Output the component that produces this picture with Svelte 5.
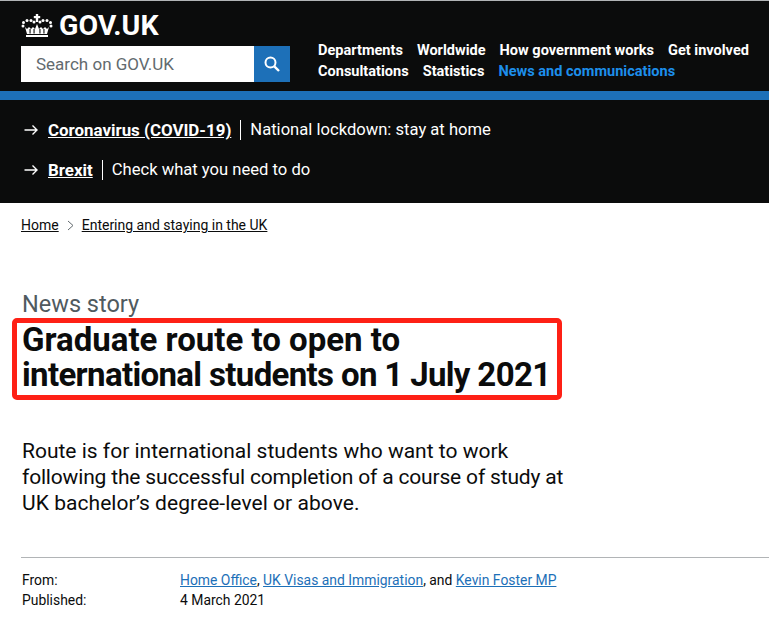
<script>
  const navRows = [
    [{ t: 'Departments' }, { t: 'Worldwide' }, { t: 'How government works' }, { t: 'Get involved' }],
    [{ t: 'Consultations' }, { t: 'Statistics' }, { t: 'News and communications', active: true }]
  ];
  const notices = [
    { link: 'Coronavirus (COVID-19)', text: 'National lockdown: stay at home' },
    { link: 'Brexit', text: 'Check what you need to do' }
  ];
  const beads = [
    [2, 12], [2.5, 8.5], [6, 6.5], [10, 6.5], [13, 8], [19, 8], [22, 6.5], [26, 6.5], [29.5, 8.5], [30, 12]
  ];
</script>

<div class="page">
  <header class="top">
    <div class="left">
      <div class="logo">
        <svg class="crown" width="32" height="23" viewBox="0 0 32 23" aria-hidden="true">
          <g fill="#fff">
            <rect x="14.8" y="0" width="2.4" height="8" />
            <rect x="12.8" y="2" width="6.4" height="2.2" />
            {#each beads as b}
              <circle cx={b[0]} cy={b[1]} r="1.5" />
            {/each}
            <path d="M4 13l2 2 2-2 2 2 2-2 2 2 2-5 2 5 2-2 2 2 2-2 2 2 2-2-2 7H6z" />
            <rect x="5" y="21" width="22" height="2" />
          </g>
          <g fill="#0b0c0c">
            <rect x="8.5" y="15" width="1.1" height="4.5" />
            <rect x="12.5" y="15" width="1.1" height="4.5" />
            <rect x="18.4" y="15" width="1.1" height="4.5" />
            <rect x="22.4" y="15" width="1.1" height="4.5" />
          </g>
        </svg>
        <span class="wordmark">GOV.UK</span>
      </div>
      <div class="search">
        <span class="placeholder">Search on GOV.UK</span>
        <span class="btn">
          <svg width="18" height="18" viewBox="0 0 18 18" aria-hidden="true">
            <circle cx="7.5" cy="7.5" r="5" fill="none" stroke="#fff" stroke-width="2" />
            <path d="M11.3 11.3L16 16" stroke="#fff" stroke-width="2.4" />
          </svg>
        </span>
      </div>
    </div>
    <nav class="nav">
      {#each navRows as row}
        <div class="navrow">
          {#each row as item}
            <span class:active={item.active}>{item.t}</span>
          {/each}
        </div>
      {/each}
    </nav>
  </header>
  <div class="bar"></div>
  <section class="notices">
    {#each notices as n}
      <div class="notice">
        <svg class="arrow" width="15" height="12" viewBox="0 0 15 12" aria-hidden="true">
          <path d="M0.5 6H13M8.5 1.5L13 6L8.5 10.5" fill="none" stroke="#fff" stroke-width="1.4" />
        </svg>
        <a href="#top" class="nlink">{n.link}</a>
        <span class="ntext">{n.text}</span>
      </div>
    {/each}
  </section>
  <main class="main">
    <nav class="crumbs">
      <a href="#top">Home</a>
      <svg width="7" height="11" viewBox="0 0 7 11" aria-hidden="true">
        <path d="M1 1L6 5.5L1 10" fill="none" stroke="#626a6e" stroke-width="1" />
      </svg>
      <a href="#top">Entering and staying in the UK</a>
    </nav>
    <p class="kicker">News story</p>
    <div class="hl">
      <h1><span class="h-a">Graduate route to open to</span><span class="h-b">international students on 1 July 2021</span></h1>
    </div>
    <p class="lead"><span>Route is for international students who want to work</span><span class="l-b">following the successful completion of a course of study at</span><span class="l-c">UK bachelor’s degree-level or above.</span></p>
    <dl class="meta">
      <dt>From:</dt>
      <dd><a href="#top">Home Office</a>, <a href="#top">UK Visas and Immigration</a>, and <a href="#top">Kevin Foster MP</a></dd>
      <dt>Published:</dt>
      <dd>4 March 2021</dd>
    </dl>
  </main>
</div>

<style>
  :global(body) {
    margin: 0;
    background: #fff;
  }
  .page {
    width: 769px;
    height: 623px;
    overflow: hidden;
    font-family: Roboto, "Liberation Sans", sans-serif;
    color: #0b0c0c;
  }
  .top {
    background: #0b0c0c;
    height: 90px;
    border-top: 1px solid #b1b4b6;
    display: flex;
    padding-left: 21px;
  }
  .left {
    width: 269px;
    padding-top: 11px;
  }
  .logo {
    display: flex;
    align-items: center;
    gap: 6px;
    height: 26px;
    margin-bottom: 8px;
  }
  .crown {
    flex: none;
  }
  .wordmark {
    color: #fff;
    font-size: 28.5px;
    font-weight: 700;
  }
  .search {
    display: flex;
    height: 36px;
    background: #fff;
  }
  .placeholder {
    flex: 1;
    color: #626a6e;
    font-size: 17px;
    line-height: 36px;
    padding-left: 15px;
  }
  .btn {
    width: 36px;
    background: #1d70b8;
    display: flex;
    align-items: center;
    justify-content: center;
  }
  .nav {
    padding: 39px 0 0 28px;
    color: #fff;
    font-size: 14.55px;
    font-weight: 700;
    line-height: 21px;
  }
  .navrow {
    display: flex;
    gap: 14px;
    white-space: nowrap;
  }
  .active {
    color: #1d8feb;
  }
  .bar {
    height: 9px;
    background: #1d70b8;
  }
  .notices {
    background: #0b0c0c;
    color: #fff;
    height: 103px;
    padding-top: 10px;
    box-sizing: border-box;
  }
  .notice {
    display: flex;
    align-items: center;
    height: 40px;
    padding-left: 24px;
    font-size: 16.6px;
    white-space: nowrap;
  }
  .arrow {
    margin-right: 9px;
  }
  .nlink {
    color: #fff;
    font-size: 16.9px;
    font-weight: 700;
    text-decoration: underline;
    padding-right: 9px;
  }
  .ntext {
    border-left: 1px solid #fff;
    padding-left: 9px;
    line-height: 20px;
  }
  .main {
    padding-left: 21px;
  }
  .crumbs {
    display: flex;
    align-items: center;
    gap: 8px;
    height: 20px;
    margin-top: 12px;
    font-size: 14px;
  }
  .crumbs a {
    color: #0b0c0c;
  }
  .kicker {
    margin: 54px 0 0 1px;
    color: #505a5f;
    font-size: 23.5px;
    line-height: 30px;
  }
  .hl {
    position: relative;
  }
  .hl::after {
    content: "";
    position: absolute;
    left: -9px;
    top: -1px;
    width: 550px;
    height: 82px;
    box-sizing: border-box;
    border: 5px solid #fe2015;
    border-radius: 5px;
    pointer-events: none;
  }
  h1 {
    margin: 0;
    padding: 3px 0 0 1px;
    font-size: 33px;
    font-weight: 700;
    line-height: 35px;
    white-space: nowrap;
  }
  h1 span, .lead span {
    display: block;
  }
  .h-b {
    letter-spacing: -0.65px;
  }
  .lead {
    margin: 46px 0 0 1px;
    font-size: 21px;
    line-height: 26px;
    white-space: nowrap;
  }
  .l-b {
    letter-spacing: -0.17px;
  }
  .l-c {
    letter-spacing: 0.05px;
  }
  .meta {
    margin: 41px 0 0;
    padding-top: 12px;
    border-top: 1px solid #b1b4b6;
    display: grid;
    grid-template-columns: 159px 1fr;
    font-size: 13.9px;
    line-height: 20px;
  }
  dt, dd {
    margin: 0;
  }
  dt {
    padding-left: 1px;
    margin-right: -1px;
  }
  dd a {
    color: #1d70b8;
  }
</style>
